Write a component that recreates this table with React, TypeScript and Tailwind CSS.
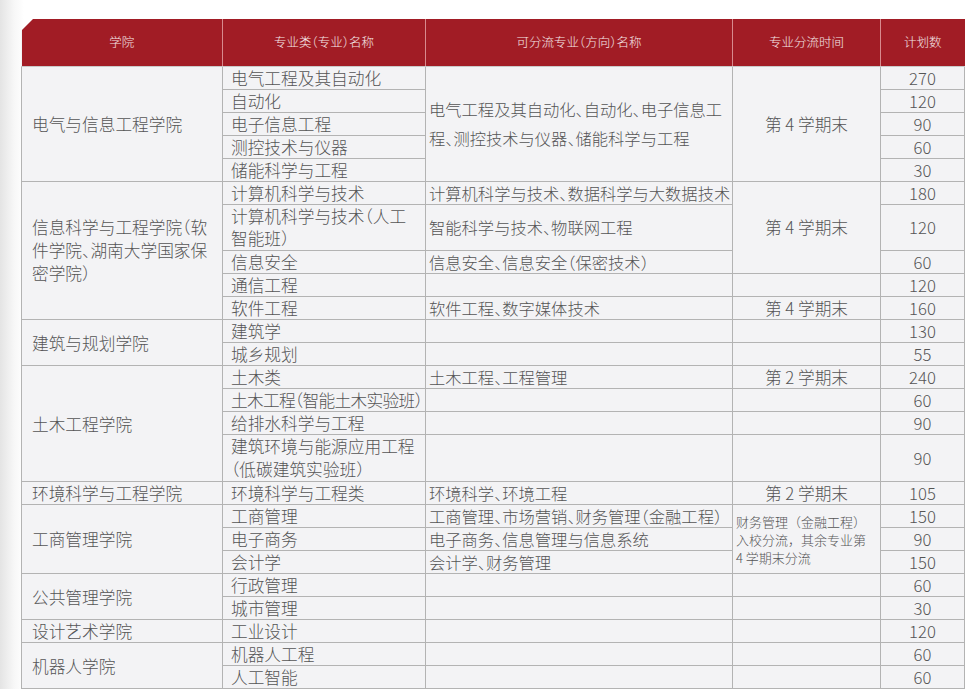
import React from "react";

const td = "border border-[#b3b3b3] p-0 align-middle";
const c1 = `${td} pl-[10px] text-left`;
const c2 = `${td} pl-[8px] text-left whitespace-nowrap`;
const c3 = `${td} pl-[3px] text-left whitespace-nowrap text-[16.3px]`;
const c4 = `${td} text-center whitespace-nowrap`;
const c5 = `${td} text-center`;
const row = "h-[22.92px]";
const row2 = "h-[45.84px]";

export default function App() {
  return (
    <div className="min-h-screen w-full bg-[linear-gradient(to_right,#e4e4e4,#f7f7f7_14px,#ffffff_24px)] pt-[19px] pl-[21px] overflow-hidden">
      <table
        className="table-fixed border-collapse bg-[#f3f3f5] text-[#555555] text-[16.7px] leading-[22px] font-light [font-feature-settings:'halt'] [clip-path:polygon(12px_0,100%_0,100%_100%,0_100%,0_12px)] w-[943px]"
        style={{ fontFamily: '"Noto Sans CJK SC", "Noto Sans", sans-serif' }}
      >
        <colgroup>
          <col className="w-[201px]" />
          <col className="w-[203px]" />
          <col className="w-[307px]" />
          <col className="w-[148px]" />
          <col className="w-[84px]" />
        </colgroup>
        <thead>
          <tr className="h-[47px] bg-[#a11c25] text-[12.5px] text-white/90">
            <th className="border-r border-r-[#d88a8e] border-b border-b-[#c9c9c9] font-light">学院</th>
            <th className="border-r border-r-[#d88a8e] border-b border-b-[#c9c9c9] font-light">专业类（专业）名称</th>
            <th className="border-r border-r-[#d88a8e] border-b border-b-[#c9c9c9] font-light">可分流专业（方向）名称</th>
            <th className="border-r border-r-[#d88a8e] border-b border-b-[#c9c9c9] font-light">专业分流时间</th>
            <th className="border-b border-b-[#c9c9c9] font-light">计划数</th>
          </tr>
        </thead>
        <tbody>
          <tr className={row}>
            <td className={c1} rowSpan={5}>电气与信息工程学院</td>
            <td className={c2}>电气工程及其自动化</td>
            <td className={`${c3} leading-[29px]`} rowSpan={5}>
              电气工程及其自动化、自动化、电子信息工
              <br />
              程、测控技术与仪器、储能科学与工程
            </td>
            <td className={c4} rowSpan={5}>第 4 学期末</td>
            <td className={c5}>270</td>
          </tr>
          <tr className={row}>
            <td className={c2}>自动化</td>
            <td className={c5}>120</td>
          </tr>
          <tr className={row}>
            <td className={c2}>电子信息工程</td>
            <td className={c5}>90</td>
          </tr>
          <tr className={row}>
            <td className={c2}>测控技术与仪器</td>
            <td className={c5}>60</td>
          </tr>
          <tr className={row}>
            <td className={c2}>储能科学与工程</td>
            <td className={c5}>30</td>
          </tr>

          <tr className={row}>
            <td className={`${c1} leading-[23px]`} rowSpan={5}>
              信息科学与工程学院（软
              <br />
              件学院、湖南大学国家保
              <br />
              密学院）
            </td>
            <td className={c2}>计算机科学与技术</td>
            <td className={c3}>计算机科学与技术、数据科学与大数据技术</td>
            <td className={c4} rowSpan={3}>第 4 学期末</td>
            <td className={c5}>180</td>
          </tr>
          <tr className={row2}>
            <td className={`${c2} leading-[22.9px]`}>
              计算机科学与技术（人工
              <br />
              智能班）
            </td>
            <td className={c3}>智能科学与技术、物联网工程</td>
            <td className={c5}>120</td>
          </tr>
          <tr className={row}>
            <td className={c2}>信息安全</td>
            <td className={c3}>信息安全、信息安全（保密技术）</td>
            <td className={c5}>60</td>
          </tr>
          <tr className={row}>
            <td className={c2}>通信工程</td>
            <td className={c3}></td>
            <td className={c4}></td>
            <td className={c5}>120</td>
          </tr>
          <tr className={row}>
            <td className={c2}>软件工程</td>
            <td className={c3}>软件工程、数字媒体技术</td>
            <td className={c4}>第 4 学期末</td>
            <td className={c5}>160</td>
          </tr>

          <tr className={row}>
            <td className={c1} rowSpan={2}>建筑与规划学院</td>
            <td className={c2}>建筑学</td>
            <td className={c3}></td>
            <td className={c4}></td>
            <td className={c5}>130</td>
          </tr>
          <tr className={row}>
            <td className={c2}>城乡规划</td>
            <td className={c3}></td>
            <td className={c4}></td>
            <td className={c5}>55</td>
          </tr>

          <tr className={row}>
            <td className={c1} rowSpan={4}>土木工程学院</td>
            <td className={c2}>土木类</td>
            <td className={c3}>土木工程、工程管理</td>
            <td className={c4}>第 2 学期末</td>
            <td className={c5}>240</td>
          </tr>
          <tr className={row}>
            <td className={`${c2} tracking-[-0.7px]`}>土木工程（智能土木实验班）</td>
            <td className={c3}></td>
            <td className={c4}></td>
            <td className={c5}>60</td>
          </tr>
          <tr className={row}>
            <td className={c2}>给排水科学与工程</td>
            <td className={c3}></td>
            <td className={c4}></td>
            <td className={c5}>90</td>
          </tr>
          <tr className={row2}>
            <td className={`${c2} leading-[22.9px]`}>
              建筑环境与能源应用工程
              <br />
              （低碳建筑实验班）
            </td>
            <td className={c3}></td>
            <td className={c4}></td>
            <td className={c5}>90</td>
          </tr>

          <tr className={row}>
            <td className={c1}>环境科学与工程学院</td>
            <td className={c2}>环境科学与工程类</td>
            <td className={c3}>环境科学、环境工程</td>
            <td className={c4}>第 2 学期末</td>
            <td className={c5}>105</td>
          </tr>

          <tr className={row}>
            <td className={c1} rowSpan={3}>工商管理学院</td>
            <td className={c2}>工商管理</td>
            <td className={c3}>工商管理、市场营销、财务管理（金融工程）</td>
            <td
              className={`${td} align-top pl-[3px] pt-[8px] text-[13px] leading-[18px] text-left [font-feature-settings:normal]`}
              rowSpan={3}
            >
              财务管理（金融工程）
              <br />
              入校分流，其余专业第
              <br />4 学期末分流
            </td>
            <td className={c5}>150</td>
          </tr>
          <tr className={row}>
            <td className={c2}>电子商务</td>
            <td className={c3}>电子商务、信息管理与信息系统</td>
            <td className={c5}>90</td>
          </tr>
          <tr className={row}>
            <td className={c2}>会计学</td>
            <td className={c3}>会计学、财务管理</td>
            <td className={c5}>150</td>
          </tr>

          <tr className={row}>
            <td className={c1} rowSpan={2}>公共管理学院</td>
            <td className={c2}>行政管理</td>
            <td className={c3}></td>
            <td className={c4}></td>
            <td className={c5}>60</td>
          </tr>
          <tr className={row}>
            <td className={c2}>城市管理</td>
            <td className={c3}></td>
            <td className={c4}></td>
            <td className={c5}>30</td>
          </tr>

          <tr className={row}>
            <td className={c1}>设计艺术学院</td>
            <td className={c2}>工业设计</td>
            <td className={c3}></td>
            <td className={c4}></td>
            <td className={c5}>120</td>
          </tr>

          <tr className={row}>
            <td className={c1} rowSpan={2}>机器人学院</td>
            <td className={c2}>机器人工程</td>
            <td className={c3}></td>
            <td className={c4}></td>
            <td className={c5}>60</td>
          </tr>
          <tr className={row}>
            <td className={c2}>人工智能</td>
            <td className={c3}></td>
            <td className={c4}></td>
            <td className={c5}>60</td>
          </tr>
          <tr className={row}>
            <td className={c1}></td>
            <td className={c2}></td>
            <td className={c3}></td>
            <td className={c4}></td>
            <td className={c5}></td>
          </tr>
        </tbody>
      </table>
    </div>
  );
}
